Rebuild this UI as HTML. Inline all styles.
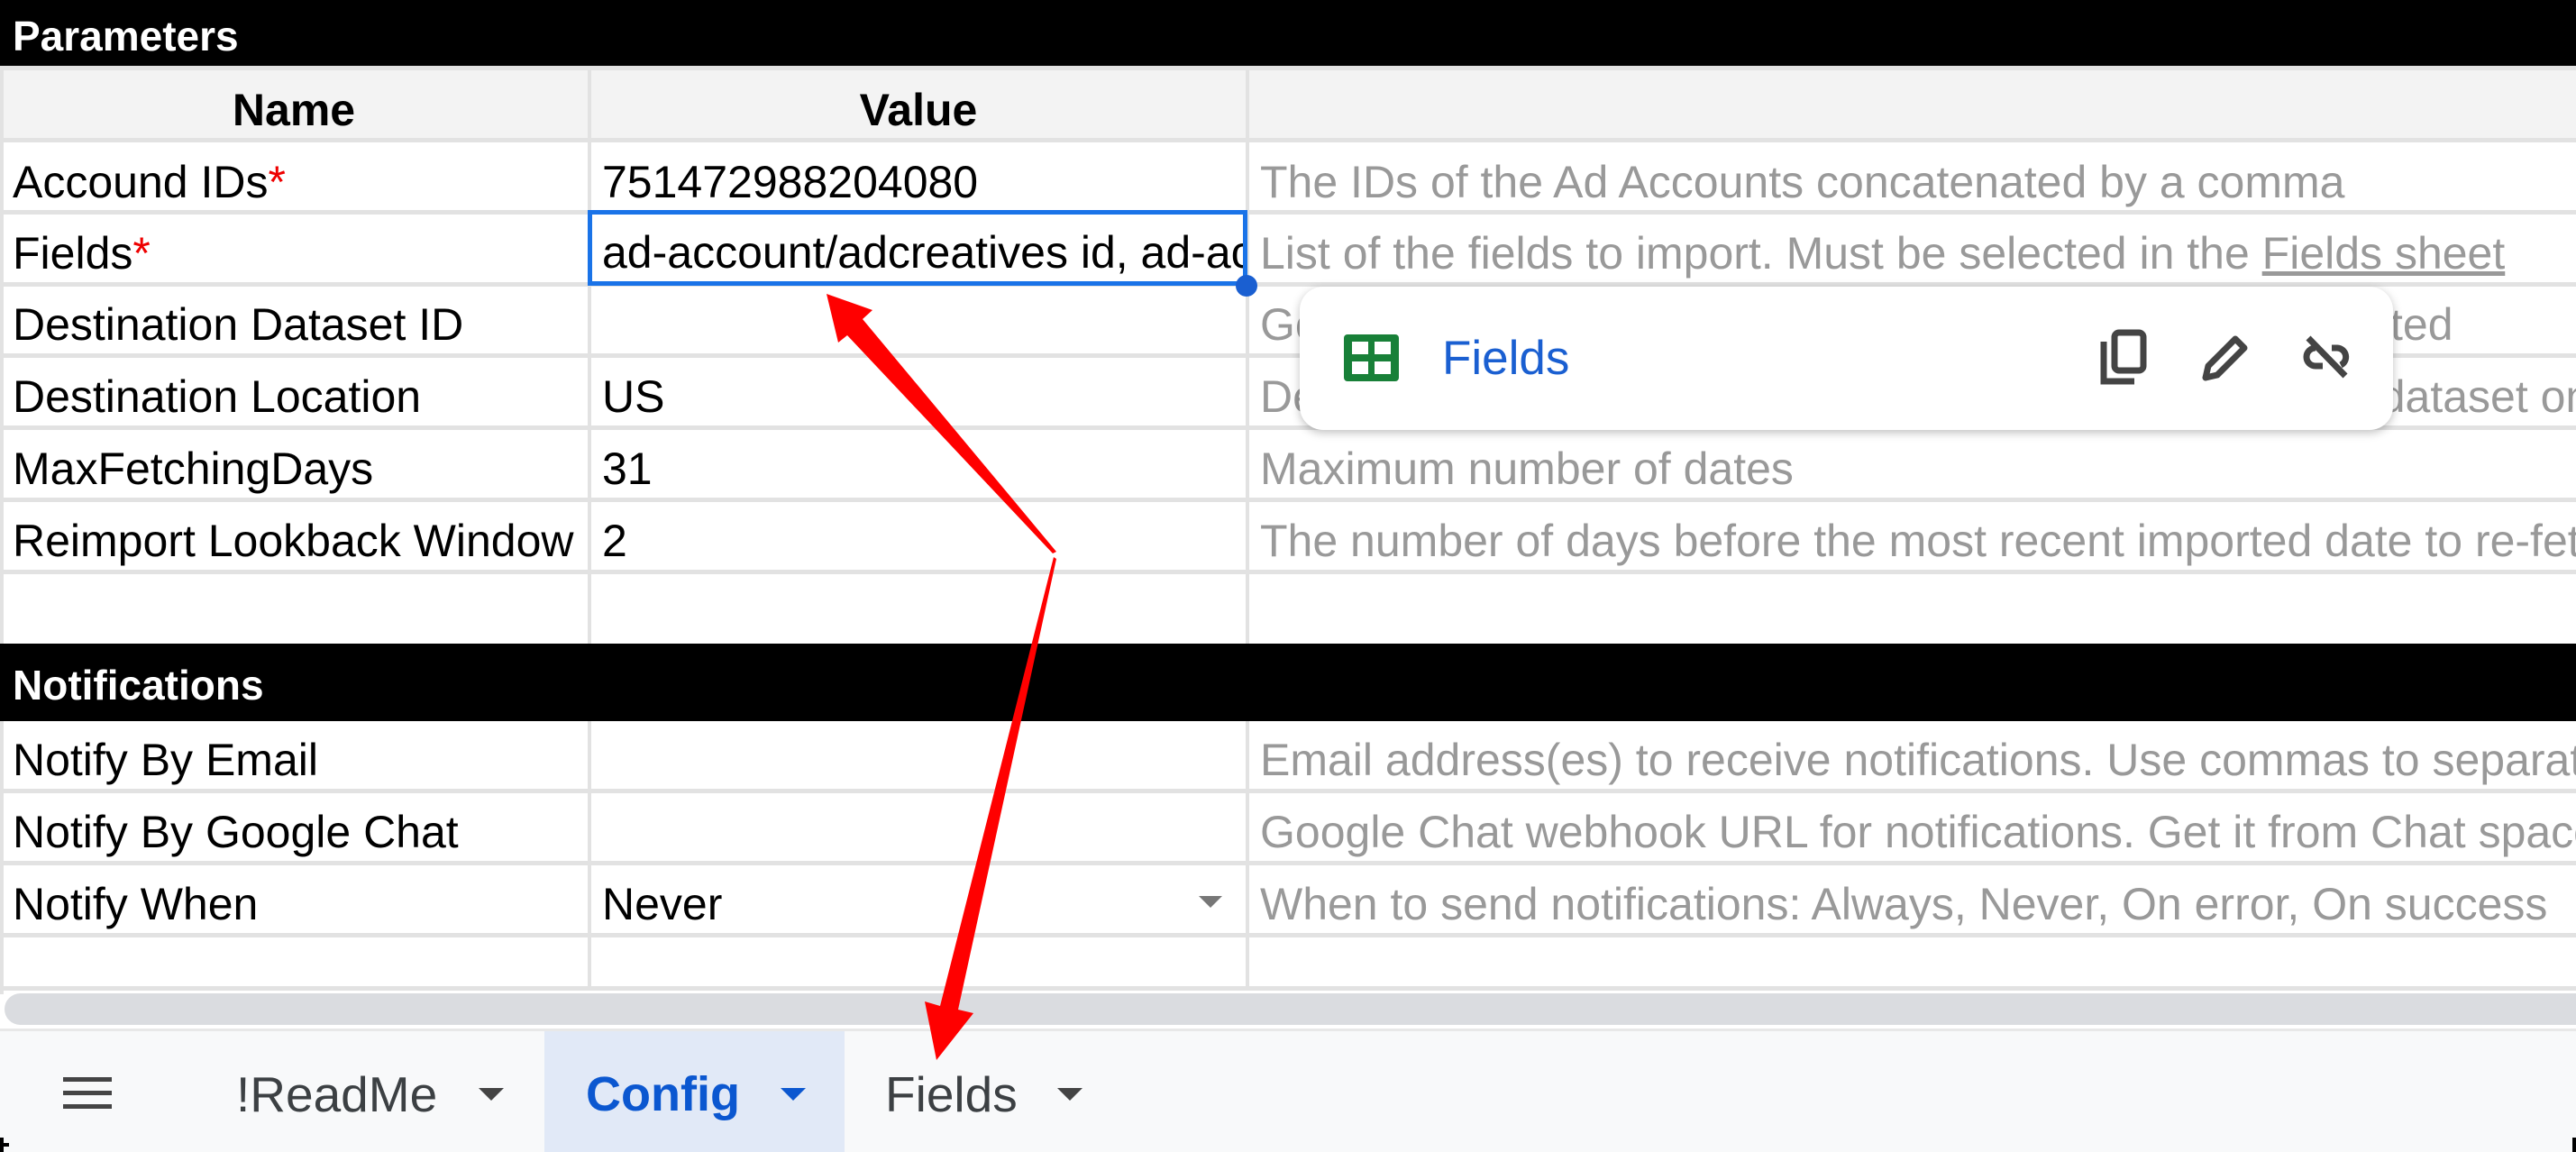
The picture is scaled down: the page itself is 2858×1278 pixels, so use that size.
<!DOCTYPE html>
<html><head><meta charset="utf-8"><style>
*{margin:0;padding:0;box-sizing:border-box}
body{width:2858px;height:1278px;overflow:hidden;background:#fff;font-family:"Liberation Sans",Arial,sans-serif;position:relative}
.a{position:absolute}
.t{position:absolute;font-size:50px;line-height:80px;white-space:nowrap;color:#000;margin-top:4px}
.d{color:#999;left:1398px}
.hl{position:absolute;left:0;width:2858px;height:5px;background:#e2e2e2}
.vl{position:absolute;width:4px;background:#e2e2e2}
.blk{position:absolute;left:0;width:2858px;background:#000;color:#fff;font-weight:bold;font-size:46px;padding-left:14px}
.star{color:#e00}
</style></head><body>
<div class="blk" style="top:0;height:73px;line-height:80px">Parameters</div>
<div class="a" style="left:0;top:73px;width:2858px;height:85px;background:#f3f3f3"></div>
<div class="vl" style="left:0;top:73px;height:1030px"></div>
<div class="vl" style="left:652px;top:73px;height:641px"></div>
<div class="vl" style="left:1382px;top:73px;height:641px"></div>
<div class="vl" style="left:652px;top:798px;height:300px"></div>
<div class="vl" style="left:1382px;top:798px;height:300px"></div>
<div class="hl" style="top:73px"></div>
<div class="hl" style="top:153px"></div>
<div class="hl" style="top:233px"></div>
<div class="hl" style="top:313px"></div>
<div class="hl" style="top:392px"></div>
<div class="hl" style="top:472px"></div>
<div class="hl" style="top:552px"></div>
<div class="hl" style="top:632px"></div>
<div class="hl" style="top:875px"></div>
<div class="hl" style="top:955px"></div>
<div class="hl" style="top:1035px"></div>
<div class="hl" style="top:1094px"></div>
<div class="t" style="left:0;width:652px;top:78px;text-align:center;font-weight:bold">Name</div>
<div class="t" style="left:656px;width:726px;top:78px;text-align:center;font-weight:bold">Value</div>

<div class="t" style="left:14px;top:158px">Accound IDs<span class="star">*</span></div>
<div class="t" style="left:668px;top:158px">751472988204080</div>
<div class="t d" style="top:158px">The IDs of the Ad Accounts concatenated by a comma</div>

<div class="t" style="left:14px;top:237px">Fields<span class="star">*</span></div>
<div class="a" style="left:652px;top:233px;width:732px;height:84px;border:5px solid #1a73e8;overflow:hidden"><div class="t" style="left:11px;top:-2px">ad-account/adcreatives id, ad-account</div></div>
<div class="a" style="left:1371px;top:305px;width:24px;height:24px;border-radius:50%;background:#1a5fd1"></div>
<div class="t d" style="top:237px">List of the fields to import. Must be selected in the <span style="text-decoration:underline">Fields sheet</span></div>

<div class="t" style="left:14px;top:316px">Destination Dataset ID</div>
<div class="t d" style="top:316px">Google BigQuery Dataset ID</div>
<div class="t" style="left:2527px;top:316px;color:#999">imported</div>
<div class="t" style="left:14px;top:396px">Destination Location</div>
<div class="t" style="left:668px;top:396px">US</div>
<div class="t d" style="top:396px">Destination location</div>
<div class="t" style="left:2599px;top:396px;color:#999">e dataset on</div>
<div class="t" style="left:14px;top:476px">MaxFetchingDays</div>
<div class="t" style="left:668px;top:476px">31</div>
<div class="t d" style="top:476px">Maximum number of dates</div>
<div class="t" style="left:14px;top:556px">Reimport Lookback Window</div>
<div class="t" style="left:668px;top:556px">2</div>
<div class="t d" style="top:556px">The number of days before the most recent imported date to re-fetch</div>

<div class="blk" style="top:714px;height:86px;line-height:92px">Notifications</div>
<div class="t" style="left:14px;top:799px">Notify By Email</div>
<div class="t d" style="top:799px">Email address(es) to receive notifications. Use commas to separate</div>
<div class="t" style="left:14px;top:879px">Notify By Google Chat</div>
<div class="t d" style="top:879px">Google Chat webhook URL for notifications. Get it from Chat space</div>
<div class="t" style="left:14px;top:959px">Notify When</div>
<div class="t" style="left:668px;top:959px">Never</div>
<div class="a" style="left:1330px;top:994px;width:0;height:0;border-left:13px solid transparent;border-right:13px solid transparent;border-top:13px solid #777"></div>
<div class="t d" style="top:959px">When to send notifications: Always, Never, On error, On success</div>

<div class="a" style="left:5px;top:1102px;width:2853px;height:35px;border-radius:18px 0 0 18px;background:#dadce0"></div>
<div class="a" style="left:0;top:1141px;width:2858px;height:137px;background:#f8f9fa;border-top:3px solid #e8e8e8"></div>
<div class="a" style="left:604px;top:1144px;width:333px;height:134px;background:#e1e9f7"></div>
<div class="a" style="left:70px;top:1195px;width:54px;height:5px;background:#444"></div>
<div class="a" style="left:70px;top:1210px;width:54px;height:5px;background:#444"></div>
<div class="a" style="left:70px;top:1225px;width:54px;height:5px;background:#444"></div>
<div class="t" style="left:262px;top:1170px;color:#3c4043;font-size:55px">!ReadMe</div>
<div class="a" style="left:531px;top:1207px;border-left:14px solid transparent;border-right:14px solid transparent;border-top:14px solid #444"></div>
<div class="t" style="left:650px;top:1170px;color:#0b57d0;font-size:54px;font-weight:bold">Config</div>
<div class="a" style="left:866px;top:1207px;border-left:14px solid transparent;border-right:14px solid transparent;border-top:14px solid #0b57d0"></div>
<div class="t" style="left:982px;top:1170px;color:#3c4043;font-size:55px">Fields</div>
<div class="a" style="left:1173px;top:1207px;border-left:14px solid transparent;border-right:14px solid transparent;border-top:14px solid #444"></div>
<div class="a" style="left:0;top:1262px;width:4px;height:16px;background:#000"></div>
<div class="a" style="left:0;top:1268px;width:10px;height:4px;background:#000"></div>
<div class="a" style="left:2854px;top:1262px;width:4px;height:16px;background:#000"></div>

<div class="a" style="left:1442px;top:318px;width:1213px;height:159px;background:#fff;border-radius:26px;box-shadow:0 3px 10px rgba(0,0,0,.25)">
<svg class="a" style="left:49px;top:53px" width="61" height="52" viewBox="0 0 61 52"><rect width="61" height="52" rx="4" fill="#188038"/><rect x="9" y="8" width="18" height="14" fill="#fff"/><rect x="34" y="8" width="18" height="14" fill="#fff"/><rect x="9" y="30" width="18" height="14" fill="#fff"/><rect x="34" y="30" width="18" height="14" fill="#fff"/></svg>
<div class="t" style="left:158px;top:36px;color:#1a5fd1;font-size:53px">Fields</div>
<svg class="a" style="left:888px;top:47px" width="52" height="62" viewBox="0 0 52 62" fill="none" stroke="#444" stroke-width="7"><path d="M4 14V58H38"/><rect x="16" y="4" width="32" height="42" rx="5"/></svg>
<svg class="a" style="left:1001px;top:52px" width="52" height="53" viewBox="0 0 52 53"><path d="M4 49L7 36L37 6L47 16L17 46Z" fill="none" stroke="#444" stroke-width="7" stroke-linejoin="round"/></svg>
<svg class="a" style="left:1113px;top:54px" width="53" height="48" viewBox="0 0 53 48" fill="none" stroke="#444" stroke-width="7"><path d="M14 14A10 10 0 0 0 14 34H22M32 14H38A10 10 0 0 1 42 33"/><path d="M6 3L47 45"/></svg>
</div>

<svg class="a" style="left:0;top:0" width="2858" height="1278" viewBox="0 0 2858 1278">
<polygon fill="#f00" points="917,326 968,344 957,354 1172,612 1168,614 940,372 930,380"/>
<polygon fill="#f00" points="1169,618 1172,620 1063,1120 1080,1124 1039,1176 1026,1111 1043,1116"/>
</svg>
</body></html>
